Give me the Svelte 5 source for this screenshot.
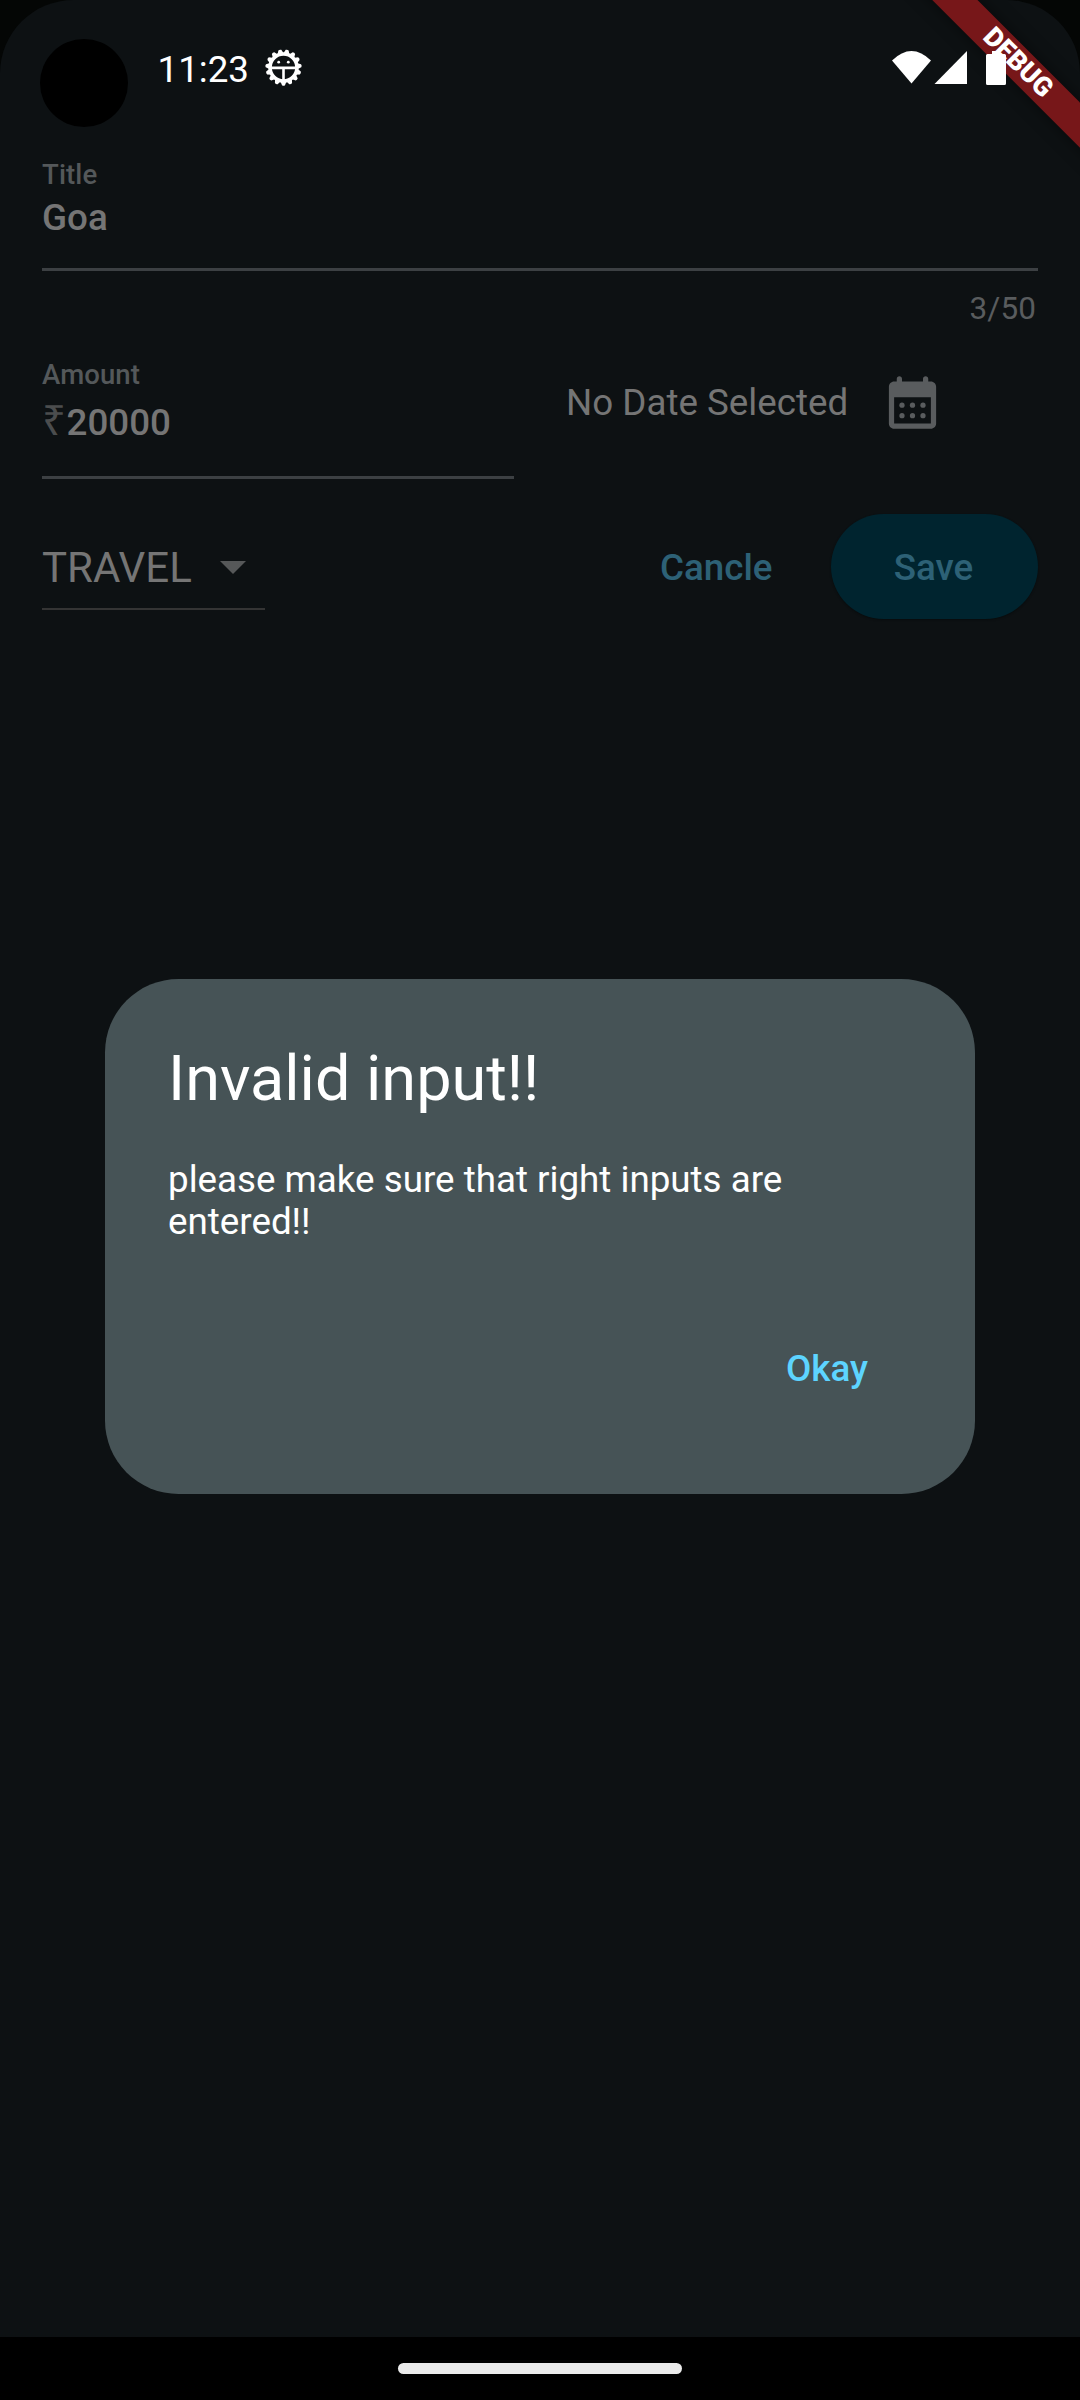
<script>
  const teeth = Array.from({ length: 15 }, (_, i) => 90 + i * 24);
</script>

<div class="screen">
  <main class="sheet">
    <header class="status">
      <span class="camera"></span>
      <span class="time">11:23</span>
      <svg class="gear" viewBox="-18.5 -18.5 37 37">
        {#each teeth as angle}
          <path d="M13 -3.4L17.700 -1.500Q18.700 0 17.700 1.500L13 3.400Z" fill="#fff" transform="rotate({angle})" />
        {/each}
        <circle r="13.400" fill="#0d1113" stroke="#fff" stroke-width="3.500" />
        <path d="M-13 .4H13M0 .4V14" stroke="#fff" stroke-width="2.600" />
        <circle cx="-4.800" cy="-5.300" r="1.400" fill="#fff" /><circle cx="4.800" cy="-5.300" r="1.400" fill="#fff" />
      </svg>
      <svg class="signals" viewBox="892 50 116 36" fill="#fff">
        <path d="M892 60.500Q911.500 41.500 931 60.500L911.500 83.500Z" />
        <path d="M967 51V84H934.500Z" />
      </svg>
    </header>

    <section class="field title-field">
      <div class="label">Title</div>
      <div class="value">Goa</div>
    </section>
    <div class="counter">3/50</div>

    <div class="row amount-row">
      <section class="field amount-field">
        <div class="label">Amount</div>
        <div class="value"><span class="rupee">₹</span>20000</div>
      </section>
      <div class="date">
        <span>No Date Selected</span>
        <svg viewBox="0 0 24 24" fill="#595c5e">
          <path fill-rule="evenodd" d="M19 4h-1V3c0-.55-.45-1-1-1s-1 .45-1 1v1H8V3c0-.55-.45-1-1-1s-1 .45-1 1v1H5c-1.110 0-1.990.9-1.990 2L3 20c0 1.100.89 2 2 2h14c1.100 0 2-.9 2-2V6c0-1.100-.9-2-2-2zM19 20H5V10h14z" />
          {#each [8, 12, 16] as cx}
            <circle {cx} cy="13" r="1" /><circle {cx} cy="17" r="1" />
          {/each}
        </svg>
      </div>
    </div>

    <div class="row actions">
      <div class="select">
        <span>TRAVEL</span>
        <svg viewBox="0 0 26 13"><path d="M0 0H26L13 13Z" fill="#565859" /></svg>
      </div>
      <button class="cancel">Cancle</button>
      <button class="save">Save</button>
    </div>
  </main>

  <footer><span></span></footer>

  <div class="overlay">
    <div class="dialog">
      <h1>Invalid input!!</h1>
      <p>please make sure that right inputs are entered!!</p>
      <button>Okay</button>
    </div>
  </div>

  <div class="corner"><div class="ribbon">DEBUG</div></div>
  <svg class="battery" viewBox="0 0 20 34" fill="#fff">
    <path d="M6 0h8v3h4.500q1.500 0 1.500 1.500v28q0 1.500-1.500 1.500h-17q-1.500 0-1.500-1.500v-28q0-1.500 1.500-1.500h4.500z" />
  </svg>
</div>

<style>
  :global(body) { margin: 0; background: #040605; }
  .screen {
    position: relative; width: 1080px; height: 2400px; overflow: hidden;
    display: flex; flex-direction: column; background: #040605;
    font-family: Roboto, "Noto Sans", sans-serif; color: #757575;
  }
  .screen * { box-sizing: border-box; }
  svg { display: block; }
  button { border: 0; background: none; padding: 0; font: 500 36.750px/43px Roboto, sans-serif; color: #2d6176; }
  .sheet { flex: 1; padding: 0 42px; background: #0d1113; border-radius: 73.500px 73.500px 0 0; }

  .status { display: flex; height: 157px; padding-top: 39px; align-items: flex-start; margin-right: 30px; }
  .camera { width: 88px; height: 88px; margin-left: -2px; border-radius: 50%; background: #000; }
  .time { margin: 9px 0 0 29.500px; width: 107.500px; font-size: 36.750px; line-height: 43px; color: #fff; white-space: nowrap; }
  .gear { width: 37px; height: 37px; margin: 10px 0 0 0; }
  .signals { width: 116px; height: 36px; margin: 11px 0 0 auto; }

  .field { border-bottom: 3px solid #3c4043; }
  .title-field { height: 114px; }
  .label { font-weight: 500; font-size: 27.560px; line-height: 36px; letter-spacing: .1px; color: #54585a; }
  .value { margin-top: 3px; font-weight: 500; font-size: 36.750px; line-height: 43px; }
  .counter { margin-top: 19px; padding-right: 2px; text-align: right; font-size: 31.500px; line-height: 37px; letter-spacing: .1px; color: #595c5e; }
  .row { display: flex; }
  .amount-row { margin-top: 30px; height: 122px; }
  .amount-field { width: 472px; height: 122px; }
  .amount-field .value { display: flex; align-items: baseline; margin-top: 4px; height: 43px; }
  .rupee { width: 24.500px; font: 400 42px/43px "Noto Sans", sans-serif; color: #4b4d4e; }
  .date { display: flex; align-items: center; height: 91px; margin-left: 52px; font-size: 36.750px; }
  .date svg { width: 63px; height: 63px; margin-left: 33px; }
  .actions { margin-top: 35px; height: 105px; align-items: center; }
  .select { display: flex; align-items: center; width: 223px; height: 84px; margin-top: 2px; border-bottom: 2px solid #343434; font-size: 42px; }
  .select span { padding-top: 1px; }
  .select svg { width: 26px; height: 13px; margin: 2px 0 0 28.500px; }
  .cancel { margin: 2px 0 0 auto; }
  .save { width: 207px; height: 105px; margin-left: 58.500px; padding: 2px 2px 0 0; border-radius: 53px; background: #00242f; box-shadow: 0 1px 2px #080c0d; }

  footer { height: 63px; display: flex; justify-content: center; padding-top: 26px; background: #000; }
  footer span { width: 284px; height: 11px; border-radius: 6px; background: #ebebeb; }

  .overlay { position: absolute; inset: 979px 105px auto; }
  .dialog { height: 514.500px; padding: 63px; border-radius: 73.500px; background: #465356; color: #fff; display: flex; flex-direction: column; }
  h1 { margin: 0; font-weight: 400; font-size: 63px; line-height: 74px; }
  p { margin: 43px 0 0; font-size: 36.750px; line-height: 42px; }
  .dialog button { margin: 104px 44px 0 auto; color: #5dd4ff; }

  .corner { position: absolute; top: 0; right: 0; width: 300px; height: 300px; overflow: hidden; }
  .ribbon {
    position: absolute; left: 37.500px; top: 47px; width: 400px; height: 31.500px;
    transform: rotate(45deg); background: #771719; box-shadow: 0 0 16px rgba(0, 0, 0, .5);
    color: #fff; font-size: 26.800px; font-weight: 900; line-height: 31.500px; text-align: center;
  }
  .battery { position: absolute; left: 986px; top: 51px; width: 20px; height: 34px; }
</style>
